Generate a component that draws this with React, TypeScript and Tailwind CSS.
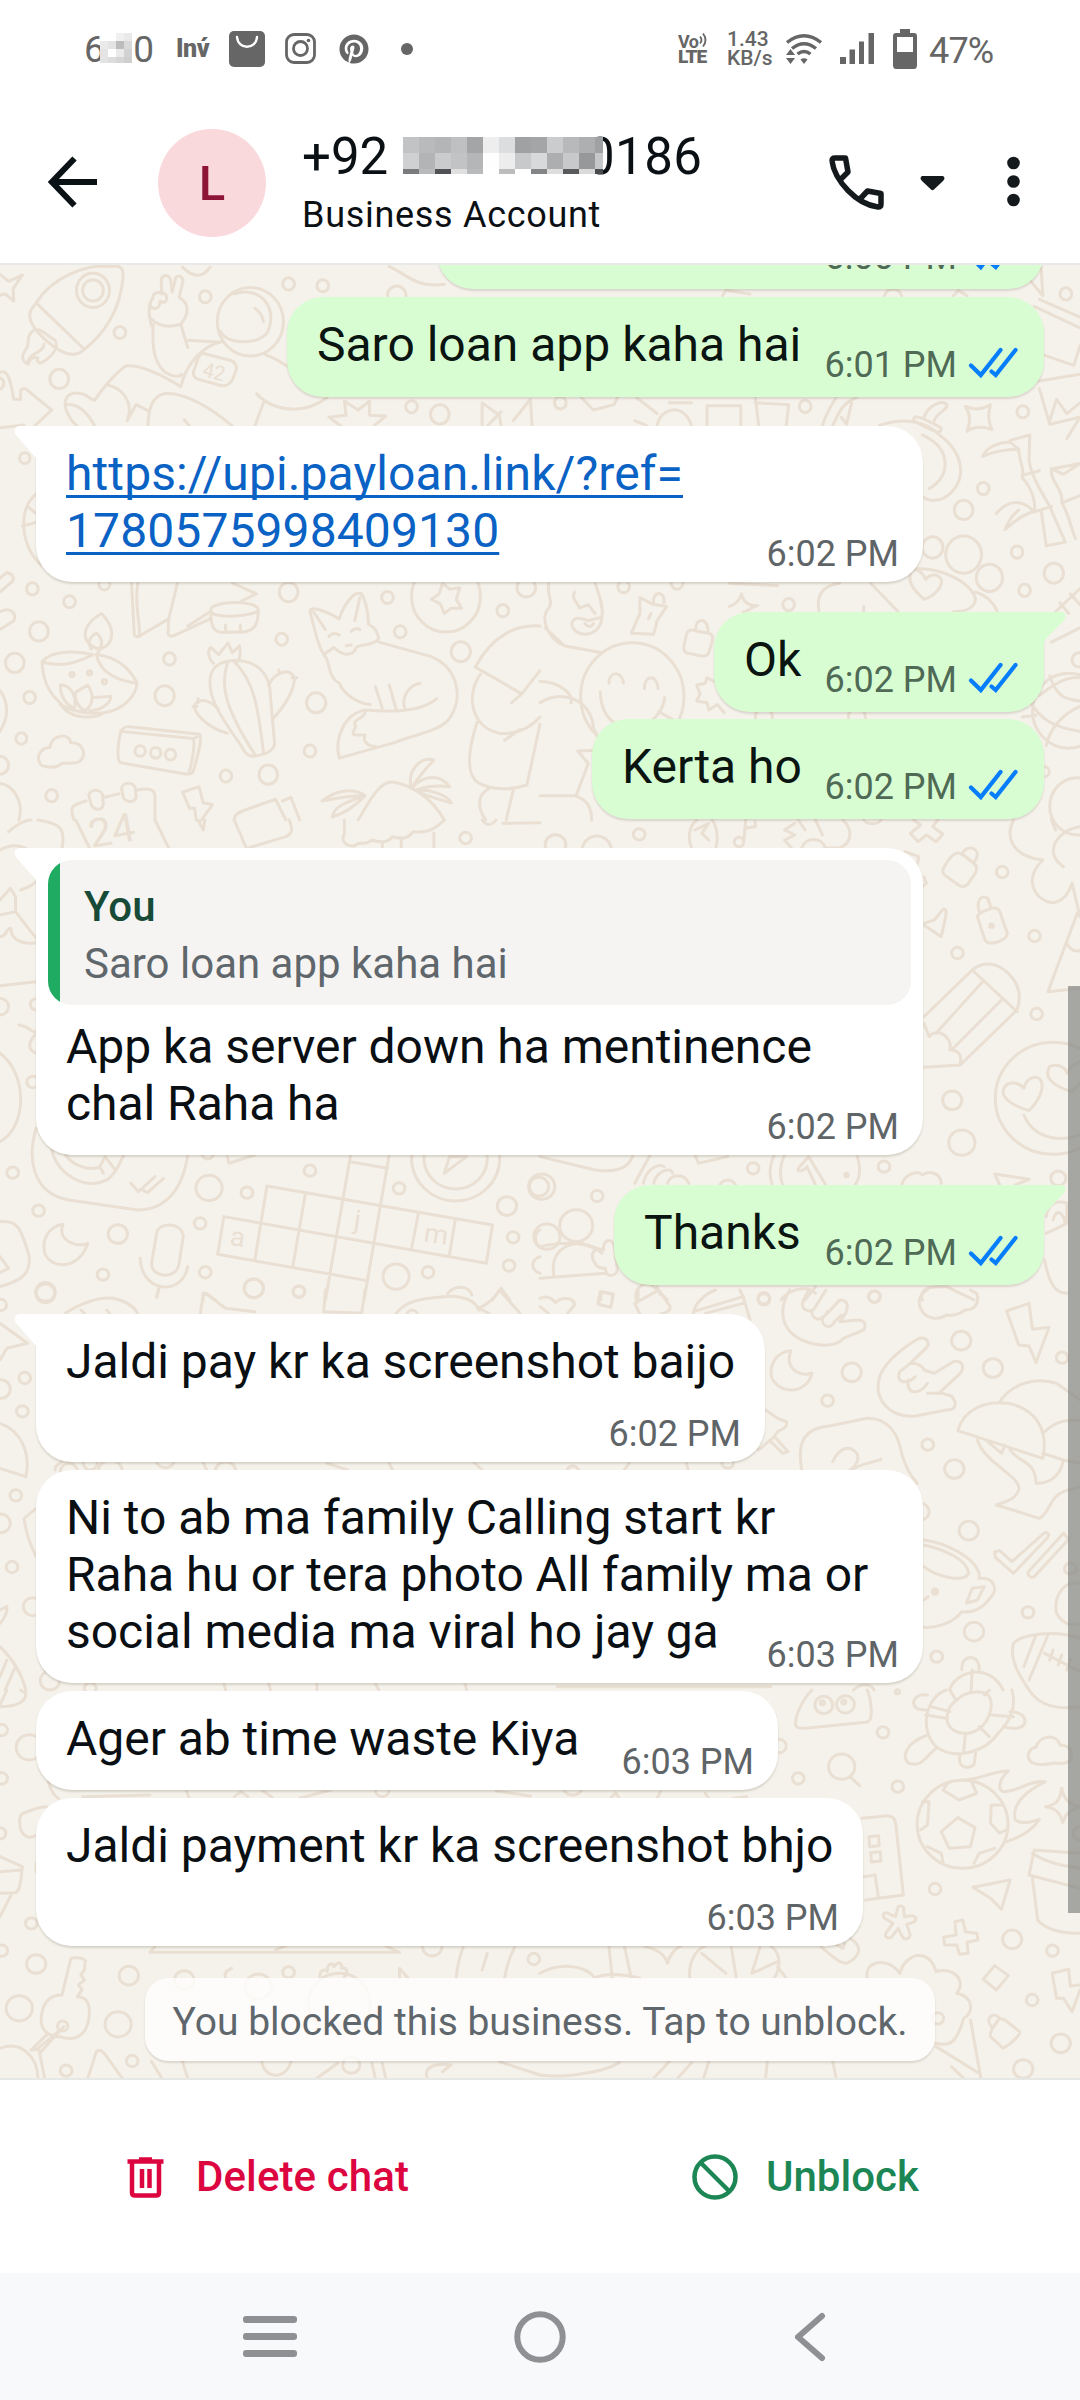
import type { ReactNode } from 'react'
import { FaPinterest } from 'react-icons/fa'

interface DoodleTile {
  transform: string
  paths: string[]
  // x, y, radius
  dots: [number, number, number][]
  letters?: [number, number, number, number, string][]
}

const TILES: DoodleTile[] = [
  {
    transform: 'translate(0 260) scale(.3444 .3571)',
    paths: [
      // rocket
      'M105 120C150 50 250 10 320 18C350 15 360 20 357 50C350 140 300 210 245 250C220 275 190 265 160 245C110 210 75 170 90 140ZM105 120L245 250',
      'M100 195C70 215 90 235 75 250C60 270 65 285 82 292C85 275 100 270 110 275C105 285 115 292 125 285C160 265 170 240 160 225M100 195C120 190 140 215 160 225M80 290C80 260 130 260 128 235',
      'M0 40L25 60L65 42L38 80L40 115L15 95L0 98',
      // astronaut
      'M440 185C430 150 432 120 445 105C440 95 460 85 470 95L468 55C472 40 490 40 495 55L500 90L510 50C520 38 535 50 530 65L520 105C550 120 550 150 525 180C490 190 460 185 440 165',
      'M435 125C445 145 465 135 465 115C480 125 490 110 480 95L470 92',
      'M445 180C440 250 450 290 480 315C500 325 520 330 528 320M525 180L545 245M548 225L640 230',
      'M680 95C760 70 810 140 775 205C740 240 660 235 640 200M740 135C755 145 762 155 765 172',
      'M590 262L665 280C685 285 690 300 685 310L675 335C665 352 650 355 635 350L580 335C560 330 558 315 565 305L575 275C580 265 585 262 590 262Z',
      'M525 355C540 290 590 240 640 230M525 355C470 320 400 290 365 297C330 320 290 370 275 393C260 390 250 370 215 373C190 375 185 400 192 420C200 440 215 460 225 465M190 405C230 400 255 430 275 465',
      'M310 350C350 355 380 390 375 430L370 450M375 440L395 405L430 422M430 465C430 420 440 380 480 374C540 370 620 420 675 465M535 447L550 465M745 375C800 430 890 430 950 385M765 400L740 465M770 265C800 275 825 290 850 310',
      'M0 315C20 305 30 330 40 390L60 390L60 365C65 358 75 358 80 365L150 420L100 465M0 470L70 462M0 330C15 335 15 355 0 362',
      'M955 440L1005 435L1000 395L1040 420L1073 395L1073 435L1120 437L1085 465M955 440L990 465',
      'M1400 465L1400 400L1450 435L1455 465M1415 465L1455 425M1490 450L1540 390L1545 465',
      'M530 20C560 50 590 50 610 20M1130 18C1180 40 1210 80 1290 68',
      'M105 655C50 700 60 800 120 855M65 745L105 735M80 690L105 710',
      // map and drum
      'M382 905L390 1050C395 1058 402 1056 410 1050L490 1005L515 905M400 905C390 960 405 1000 405 1050M490 1005L488 1045C490 1055 500 1055 510 1050L610 1005M545 1025L610 985',
      'M612 980C610 955 750 950 750 980C750 995 612 1010 612 980ZM612 980C610 1060 640 1040 690 1042C740 1045 750 1020 750 980M675 905L745 935L700 955M655 1022V1035M698 1022V1035',
      // oil lamp
      'M295 990C335 1030 335 1075 290 1090C240 1080 225 1030 295 990ZM265 1090C250 1060 270 1050 280 1045C300 1060 300 1080 280 1105',
      'M122 1125C150 1090 230 1095 270 1105C200 1140 150 1135 122 1125ZM122 1125C125 1190 150 1220 175 1240C200 1290 280 1285 300 1268C360 1260 395 1220 398 1185C370 1130 320 1110 280 1105C290 1160 350 1180 398 1185M175 1245C220 1270 270 1270 300 1268',
      'M175 1190C210 1190 225 1230 215 1255C190 1245 175 1220 175 1190M220 1210L255 1190C275 1220 270 1250 245 1262C225 1250 215 1230 220 1210M270 1225L322 1222C320 1245 290 1262 260 1262',
      // cactus
      'M610 1190C605 1130 650 1120 700 1122C760 1130 785 1170 785 1220L797 1350C800 1375 770 1385 735 1390C715 1390 710 1375 700 1360C650 1290 612 1240 610 1190ZM660 1130C640 1190 650 1250 740 1385M680 1125C740 1180 750 1260 765 1378',
      'M620 1130C600 1110 605 1090 612 1085L635 1105L662 1072L675 1100L695 1080C700 1100 695 1120 690 1125M780 1190C800 1150 850 1140 855 1175C850 1220 815 1260 793 1285M660 1325C600 1310 550 1260 570 1240C590 1225 620 1240 635 1260M810 1148V1160M848 1170H862M575 1228V1240M560 1250H572',
      // fox
      'M940 1105C925 1080 920 1060 900 985C900 970 930 975 985 1005C1000 960 1030 925 1050 935C1065 960 1070 1000 1070 1020C1090 1030 1095 1040 1100 1060C1085 1085 1030 1070 1030 1095C1015 1110 990 1105 970 1085C955 1095 945 1100 940 1105Z',
      'M910 985L945 1035M1030 1010L1045 945M955 1055C960 1045 975 1045 985 1050M1020 1040C1030 1030 1040 1030 1045 1035M1005 1080L1020 1078',
      'M1100 1070L1250 1110C1330 1140 1350 1230 1300 1290C1270 1320 1200 1330 1150 1350L985 1395C970 1340 1000 1270 1060 1260C1120 1265 1220 1270 1268 1228M940 1105C960 1120 950 1170 985 1185C1000 1220 1040 1240 1075 1245M1090 1195L1110 1255M1130 1190L1150 1258M1175 1255C1165 1220 1190 1190 1220 1185M1060 1265C1060 1285 1025 1285 1030 1300C1040 1310 1015 1325 1030 1330L1060 1330C1050 1350 1075 1365 1090 1362',
      'M1380 1140C1430 1050 1500 1020 1568 1025M1380 1140L1515 1215L1568 1150M1395 1160C1350 1220 1370 1310 1450 1325C1500 1330 1540 1310 1568 1280M1385 1295C1360 1370 1350 1440 1390 1465C1440 1490 1500 1480 1530 1470L1568 1300M1515 1215L1485 1240M1465 1345L1510 1315M1420 1480C1380 1500 1390 1540 1410 1568M1490 1485L1470 1568',
      'M120 1415C100 1390 120 1365 145 1365C150 1325 205 1325 205 1352C240 1350 255 1385 230 1405C210 1415 190 1405 180 1410C160 1425 135 1420 120 1415Z',
      'M350 1325C355 1305 370 1305 385 1308L580 1328C590 1340 570 1400 560 1435C550 1442 540 1440 530 1438L350 1408C338 1400 342 1350 350 1325ZM350 1320L560 1340C568 1345 560 1400 548 1438M560 1342L580 1330',
      'M215 1568C200 1530 210 1525 250 1515M300 1505L345 1495M395 1485C430 1478 448 1480 450 1500L450 1568M258 1500C260 1480 295 1480 298 1500L300 1525C295 1545 270 1540 265 1525ZM353 1480C355 1460 390 1460 393 1480L395 1505C390 1520 365 1520 358 1505Z',
      'M530 1490L578 1475L590 1520L617 1525L585 1568M530 1490L550 1535L565 1535L570 1568M680 1568C680 1545 700 1545 800 1510L830 1568M820 1515L845 1505L870 1568',
      'M1040 1568C1070 1520 1100 1460 1140 1462C1190 1470 1250 1500 1290 1568M1195 1480C1180 1430 1220 1390 1260 1400C1240 1420 1220 1440 1195 1480C1230 1440 1280 1440 1305 1475C1270 1470 1230 1475 1205 1485C1250 1480 1300 1500 1310 1520C1270 1510 1230 1500 1195 1480M935 1515C980 1480 1030 1480 1060 1500C1010 1500 960 1510 935 1515M1060 1500C1000 1520 970 1530 965 1560C1000 1550 1030 1530 1060 1500',
      'M1285 905L1305 922L1335 918L1325 950L1340 975L1310 975L1290 990L1278 962L1252 950L1275 935Z',
      'M0 890L20 875C40 880 45 895 30 905L0 930M0 985C30 970 50 990 40 1010L0 1035M0 1205C25 1240 25 1280 0 1320M0 1465C40 1470 70 1520 55 1568',
    ],
    dots: [
      [270, 85, 48], [270, 85, 30], [727, 173, 96], [838, 67, 17], [937, 72, 17], [596, 103, 17], [348, 203, 17], [172, 333, 27], [72, 555, 15], [1195, 411, 17],
      [1277, 432, 27], [1152, 100, 27], [94, 921, 17], [202, 957, 17], [838, 930, 27], [1125, 945, 17], [818, 1062, 17], [1162, 1041, 17], [113, 1040, 27],
      [43, 1128, 27], [492, 1117, 17], [478, 1220, 28], [86, 1225, 17], [62, 1340, 16], [918, 1240, 28], [900, 1375, 17], [656, 1445, 17], [779, 1441, 27],
      [150, 1500, 17], [1338, 1097, 28], [1460, 982, 17], [1528, 917, 27], [1295, 942, 100], [407, 1375, 15], [452, 1380, 15], [495, 1385, 15], [0, 1415, 25],
      [209, 1161, 6], [260, 1156, 6], [303, 1181, 6], [303, 908, 16],
    ],
    letters: [[585, 325, 14, 58, '42']],
  },
  {
    transform: 'translate(540 260) scale(.3444 .3571)',
    paths: [
      'M985 464C1050 440 1120 450 1160 490C1230 540 1240 610 1190 655C1160 680 1130 675 1115 665M1085 445C1085 435 1100 435 1165 470C1165 490 1150 485 1085 450M1115 440C1130 400 1180 390 1182 408C1180 420 1150 430 1145 450M1110 490C1200 530 1190 610 1130 640',
      'M485 464V408H583V464M625 400L722 405L715 464M625 380L635 464M340 464C350 410 420 400 440 464M820 464C830 430 850 400 860 385M850 464C870 420 880 400 920 385M875 440L890 460L905 400M120 385L155 420L215 405L225 385M280 385L340 430M375 400H440M275 450L310 464',
      'M1235 410C1260 420 1280 420 1308 405C1300 430 1300 450 1312 475C1290 465 1260 465 1240 480C1250 455 1250 430 1235 410Z',
      // bamboo
      'M1365 505L1422 490L1420 560C1425 600 1450 640 1480 690L1525 790L1470 800L1455 700M1390 530C1390 560 1410 590 1400 610C1430 640 1440 680 1435 705M1400 603L1450 590M1438 705L1485 690M1285 550C1300 520 1340 510 1365 510L1390 530C1350 530 1310 540 1285 550ZM1325 710C1360 670 1400 670 1435 705C1400 710 1370 740 1350 755C1360 730 1370 715 1390 700',
      'M1568 570L1485 585C1480 620 1520 640 1515 680C1540 720 1540 750 1555 780M1515 680L1568 660M1485 585L1520 600L1568 570',
      'M1435 130L1568 190M1450 110L1568 160M1445 260L1550 295L1568 240M1440 340L1568 320M1450 360L1480 460L1568 440M1480 450L1500 390L1530 430L1568 400M1530 500L1568 440M1400 30L1460 100L1455 20M530 100L540 85L610 95M1000 100C1010 75 1040 75 1050 100M1200 100L1215 85L1240 100',
      'M1080 870C1060 900 1090 930 1115 950C1150 940 1170 910 1165 895C1155 875 1130 880 1120 895C1110 870 1090 865 1080 870ZM1090 865C1160 860 1250 900 1265 950C1260 975 1240 985 1200 985M810 985C800 930 830 910 870 905M960 905L1040 985M1265 930C1300 940 1320 965 1328 985M550 905L690 912M940 985V970',
      // gnome and smiley
      'M25 905C20 940 40 960 25 975C0 1000 20 1060 70 1080L180 1100M160 905C170 935 185 970 180 1000C175 1060 100 1060 92 1020C95 1000 110 1000 140 1010L180 1000M100 930C90 950 110 960 115 975L140 965L160 990M130 1018C140 1030 150 1028 155 1018M70 1080L15 1030',
      'M200 1185C200 1150 240 1150 242 1185M303 1200C303 1160 340 1160 343 1200M175 1210C180 1300 240 1320 300 1300C340 1290 360 1250 362 1225M345 1265L410 1300',
      'M265 1045L290 990L290 945L330 965L368 970L340 1010L330 1048ZM330 960C325 925 365 925 360 960M315 1005L322 990',
      'M425 1050C428 1035 440 1035 450 1038L490 1045C505 1050 502 1060 498 1075L490 1100C485 1110 475 1110 465 1108L425 1100C413 1095 418 1080 425 1050ZM452 1035C450 1000 490 1000 488 1042',
      'M550 970C570 965 580 950 585 935C590 960 610 970 632 968C605 975 595 990 590 985M505 1180L485 1170L480 1185L455 1190L465 1215L455 1235L485 1240L490 1260L515 1245L535 1268',
      'M1420 1230C1450 1290 1500 1310 1568 1320M1480 1165C1500 1220 1520 1230 1568 1235M1450 1220C1500 1180 1540 1165 1568 1170M1470 1360C1480 1310 1520 1270 1568 1250M1400 1280L1440 1275',
      'M0 1180C60 1180 100 1220 90 1240M0 1240C60 1200 150 1230 155 1310L170 1340M110 1375L170 1372M110 1375L140 1410L105 1500M0 1500L100 1500C140 1510 150 1540 150 1568',
      'M1470 1010L1568 920M1485 1070L1568 1030M1510 960L1535 990M1540 935L1568 965',
    ],
    dots: [
      [268, 1222, 150], [1230, 825, 52], [1305, 890, 38], [1230, 700, 27], [1140, 805, 30], [59, 400, 17], [770, 410, 17], [1402, 425, 17], [1287, 640, 17],
      [1385, 818, 17], [1407, 925, 17], [1492, 877, 28], [722, 965, 17], [243, 915, 17], [398, 905, 17], [1527, 95, 17], [1565, 1120, 20], [1535, 1262, 105],
      [1560, 1530, 80], [650, 1280, 25], [920, 1280, 25], [1465, 1433, 14],
    ],
  },
  {
    transform: 'translate(0 820) scale(.3444 .3333)',
    paths: [
      'M110 0C180 10 190 30 180 84M220 0L260 84M450 0L490 84M575 0L590 30L595 0M680 0L715 84M840 0C850 30 850 40 830 50L720 84M1000 0L1000 40C990 60 1000 80 1030 78C1040 60 1060 80 1080 60C1110 70 1130 65 1140 50C1170 60 1190 50 1200 35C1240 40 1260 30 1290 0M1110 70V84M1165 60V84M1260 40V84M1400 0C1420 30 1440 0 1440 0M1460 10L1568 8',
      'M25 35C40 20 70 0 90 0M0 90C50 60 100 90 103 120M0 240L30 205L45 230L45 275L105 355M0 350C20 350 20 320 32 325C30 355 60 375 105 368M0 285L45 275M60 210C90 200 100 190 105 185M0 497L105 485M55 615C90 620 90 640 105 635M105 640C80 670 80 690 105 700M0 700C80 760 80 920 0 965',
      // watch
      'M105 925C80 1010 90 1120 200 1140L400 1170C480 1170 530 1110 545 1005M150 990C170 1070 250 1110 310 1080C340 1060 350 1020 360 1005M190 1005C220 1050 280 1050 290 1040L300 1060M380 1090L402 1115L450 1070M415 1110L428 1118L475 1075M290 1040L305 1010L335 1050M660 1010L665 1030L740 1005',
      // crossword
      'M775 1098L1430 1215M650 1190L1412 1330M632 1303L1065 1382M775 1098L740 1320M887 1120L850 1340M1018 1005L945 1440M1130 1005L1057 1440M1215 1180L1195 1285M1322 1198L1305 1305M1430 1215L1412 1330M650 1190L632 1303M1015 1025L1125 1045',
      'M1290 1060L1305 1010L1355 1010ZM183 1213C140 1220 120 1260 130 1300C150 1350 230 1350 255 1270C220 1285 165 1260 183 1213Z',
      'M455 1240C460 1205 530 1205 532 1250L520 1330C515 1380 440 1375 440 1330ZM407 1315C410 1420 530 1430 545 1340M462 1400L455 1432',
      'M0 1205C50 1200 60 1220 85 1310C90 1370 50 1385 0 1400M0 1310L25 1345L0 1358M590 1440V1420C600 1415 610 1430 625 1440M1300 1420C1320 1395 1360 1395 1370 1425M1430 1440L1455 1405L1480 1440M1568 1230C1550 1240 1550 1270 1568 1280M1568 1310C1540 1320 1540 1350 1568 1360',
    ],
    dots: [
      [1323, 1015, 128], [1323, 1015, 92], [0, 560, 25], [105, 553, 17], [95, 786, 17], [37, 1058, 17], [607, 1104, 38], [717, 1118, 17], [900, 1052, 17],
      [1159, 1105, 17], [1472, 1158, 28], [1565, 1100, 28], [112, 1172, 17], [342, 1242, 28], [581, 1210, 17], [1490, 1252, 17], [1478, 1337, 17],
      [299, 1364, 17], [132, 1416, 28], [596, 1357, 17], [737, 1405, 28], [868, 1415, 17], [1150, 1370, 38], [1243, 1357, 17], [1352, 54, 17], [603, 1000, 17],
    ],
    letters: [[265, 84, -10, 120, '24'], [665, 1275, 8, 80, 'a'], [1025, 1225, 8, 80, 'j'], [1228, 1265, 8, 80, 'm']],
  },
  {
    transform: 'translate(540 820) scale(.3444 .3333)',
    paths: [
      'M440 84C430 60 430 20 455 0M500 0C520 30 515 70 510 84M450 30L490 10L470 40L490 60M592 60L597 0M597 25L625 20V5M710 30L740 10M710 30L740 45L710 60L730 84M750 0L770 30M800 0L820 45M760 84C770 50 820 50 828 84M880 0C910 30 905 70 870 84H830M940 0C950 15 980 15 990 0',
      'M1085 0L1105 15L1075 40L1098 65L1122 45L1150 65L1170 42L1140 20L1155 0',
      'M1375 0C1350 50 1370 110 1460 120C1400 180 1440 245 1490 248C1520 245 1535 220 1545 190M1568 20C1500 30 1460 100 1520 140M1485 0L1497 30M1545 190L1568 290M1475 515L1560 280M1475 515L1568 505M1530 370C1540 390 1550 395 1568 392',
      // padlocks
      'M1180 130C1200 95 1215 95 1230 105L1265 135C1272 150 1265 160 1250 180C1240 200 1230 205 1215 195L1175 165C1165 155 1170 145 1180 130ZM1225 105C1235 75 1270 80 1270 105C1268 120 1260 125 1258 130',
      'M1270 290C1275 275 1290 275 1310 265C1330 260 1335 270 1340 290L1357 340C1355 355 1345 360 1325 367C1305 372 1295 370 1290 355ZM1275 275C1265 235 1285 225 1300 235L1310 265',
      'M1060 95L1100 110L1095 135M1115 170L1122 190L1110 200M1115 310L1145 300L1170 268C1180 265 1180 275 1178 290L1165 350L1115 315',
      // pencil
      'M1115 590L1255 450C1290 420 1330 430 1360 460C1400 500 1395 540 1385 570L1220 735L1115 742M1255 450L1385 575M1285 485L1150 640M1340 540L1195 690M1115 610L1130 650C1150 620 1200 650 1190 690C1220 690 1225 710 1220 735',
      // heart eyes
      'M1350 800C1335 820 1350 850 1420 872C1460 830 1465 790 1450 775C1430 765 1410 780 1405 805C1390 785 1360 785 1350 800ZM1480 740C1460 770 1490 800 1545 815L1568 790M1480 740C1500 730 1525 740 1530 760C1540 740 1550 730 1568 725M1405 885C1430 950 1500 970 1568 945',
      'M0 1010L160 1050C230 1060 260 1040 270 1005M275 1090L320 1005M300 1090C310 1040 350 1030 360 1040M330 1090C340 1050 380 1040 385 1060M370 1090C380 1060 420 1060 432 1090M450 1005L460 1030L545 1010M680 1005C665 1040 665 1070 675 1095M710 1005C695 1040 695 1070 705 1095M920 1005C935 1050 925 1080 915 1095M750 1045L780 1010L830 1095M750 1045C745 1060 770 1050 775 1040L800 1095M1050 1095C1060 1060 1100 1050 1110 1065C1130 1050 1165 1060 1165 1090M1320 1062L1420 1078L1380 1095M1320 1062L1335 1095',
      'M40 1365C30 1300 70 1270 120 1270L180 1290M0 1280C80 1260 150 1270 180 1300M0 1375L190 1360M160 1330C140 1300 160 1280 185 1290C180 1260 210 1250 215 1280L225 1350C220 1370 190 1375 190 1345C180 1345 165 1345 160 1330',
      'M1470 1190C1475 1150 1500 1140 1530 1150L1530 1210M1490 1200C1500 1160 1520 1180 1525 1210M1470 1240L1530 1210M1465 1320C1480 1400 1500 1420 1530 1420M175 1440L180 1415L210 1422V1440M280 1440C270 1400 310 1380 330 1400L370 1440M340 1400L350 1425M700 1440C730 1400 780 1400 800 1420M770 1440L800 1400M1110 1440C1100 1400 1140 1400 1180 1400L1260 1440',
    ],
    dots: [
      [1490, 835, 168], [578, 66, 14], [105, 1217, 48], [20, 1250, 38], [288, 43, 17], [45, 74, 30], [165, 90, 42], [1342, 156, 17], [1436, 348, 17], [1212, 399, 17],
      [1442, 582, 17], [1197, 841, 28], [1225, 968, 38], [619, 1045, 17], [999, 1040, 17], [166, 1128, 17], [5, 1100, 38], [890, 1065, 5], [1311, 317, 5],
      [1505, 1075, 22], [650, 1435, 17], [971, 1430, 17], [545, 1105, 25],
    ],
  },
  {
    transform: 'translate(0 1290) scale(.3444 .3333)',
    paths: [
      'M190 70C230 40 290 20 330 25C370 35 390 50 400 70M235 60L245 70M310 60L318 70M582 70L590 15C600 5 620 30 655 55L740 65M945 0L940 65L1050 70L1060 0M1150 70C1180 30 1230 25 1290 20C1340 15 1380 30 1390 60M1390 55C1420 40 1440 20 1450 0L1510 70M1390 55L1420 70M460 0L455 22',
      'M0 100L80 160L20 175L0 210M0 400C60 420 90 490 75 560L0 535M105 655L70 685C75 730 90 770 105 800M0 960L20 950C22 970 10 990 0 1000M0 1070C30 1100 60 1140 75 1200M15 1200L45 1130M0 1160L20 1110',
      'M160 540C160 525 170 520 180 516M590 518L600 540M950 520L1010 540M1130 520L1140 540M1375 516L1400 540M650 1180L655 1200M780 1180L785 1200M920 1200V1180M1090 1180L1100 1200M1350 1180L1355 1200',
    ],
    dots: [
      [132, 10, 28], [2, 45, 17], [737, -5, 28], [868, 5, 17], [1197, 75, 15], [72, 264, 17], [2, 297, 28], [65, 364, 17], [46, 616, 17], [2, 700, 28], [35, 831, 17],
      [95, 950, 27], [145, 1172, 28], [262, 1195, 17], [200, 545, 25], [262, 520, 20], [480, 505, 28], [320, 545, 35], [655, 545, 30],
    ],
  },
  {
    transform: 'translate(540 1290) scale(.3444 .3333)',
    paths: [
      'M0 25C20 15 35 25 45 38C60 20 100 20 100 45L80 70M0 50L25 70M175 5L213 13L205 52L168 42ZM275 40L345 0L378 50C380 65 360 70 350 72M275 40L290 72M285 30V0M445 70C450 40 480 10 510 0M445 65L590 20L610 90M580 0L590 20M480 70L590 40',
      // hands
      'M725 0C690 60 700 120 760 150C830 180 870 160 880 145L940 120C950 100 940 90 920 90L870 95M765 30C750 60 790 75 800 50M790 60C785 90 820 100 835 65M820 80C815 110 845 120 855 95L875 75M765 30L780 0M800 50L830 0M835 70L870 30C900 30 900 60 870 95',
      'M1105 55C1095 30 1105 10 1125 0M1105 55C1120 90 1160 90 1180 75C1200 80 1220 70 1235 60C1270 60 1275 30 1268 10L1250 0',
      'M1355 63L1420 40L1430 118L1478 112L1440 218L1420 168L1390 165ZM728 182C690 185 665 220 672 260C690 310 770 320 790 250C750 260 710 235 728 182Z',
      'M990 250C1010 210 1060 170 1100 145C1125 140 1135 160 1120 175L1075 220C1095 220 1110 225 1115 240L1145 250L1200 215C1225 210 1235 230 1220 250L1160 308L1195 318C1215 345 1205 360 1180 360L1090 378C1020 385 960 330 990 250ZM1045 245C1030 270 1060 290 1090 260M1070 270C1060 310 1100 320 1125 280M1075 220L1045 245M1125 310H1160',
      // umbrella
      'M1213 422C1230 360 1290 330 1360 340C1450 360 1475 430 1460 505ZM1335 335C1370 280 1440 260 1500 280L1568 330M1270 450C1290 520 1400 560 1390 600C1380 630 1350 635 1325 645L1450 685C1480 670 1480 620 1520 605L1568 590M1300 455L1340 490L1350 465M1365 480C1390 520 1440 510 1440 580C1480 580 1510 560 1520 510L1460 490M1460 430C1500 390 1530 390 1568 390M1520 510L1568 520',
      'M1320 785L1335 782L1370 815L1465 728C1475 725 1482 735 1472 745L1375 850L1322 802ZM1418 845L1520 730L1535 748L1435 860C1425 865 1415 858 1418 845Z',
      'M760 540C745 450 770 415 840 408L950 385C1010 385 1040 430 1050 490C1070 560 1090 570 1095 580M850 515C870 470 900 465 920 490C930 510 915 530 900 540M905 540C930 520 960 520 990 508M655 360L690 385L715 395C720 410 710 415 690 425L680 440L635 480M685 445L720 485L705 490L670 455',
      'M1115 750C1180 760 1260 800 1275 850C1275 860 1275 860 1275 865M1115 765C1180 780 1240 810 1245 850C1230 880 1150 860 1115 830M1275 865C1320 860 1330 900 1310 920C1290 950 1260 970 1225 965C1200 1000 1150 1015 1115 1012M1255 895L1290 890L1270 930L1238 940ZM1115 930L1127 920',
      'M1568 880C1520 870 1490 920 1500 970C1515 1000 1540 1010 1568 1000M1375 1060C1400 1030 1500 1020 1568 1045M1375 1060C1360 1110 1400 1170 1420 1200M1440 1035L1405 1130M1475 1035L1420 1170M1465 1090L1568 1145M1490 1080L1480 1110M1515 1095L1505 1125M1540 1108L1530 1140M1190 1200C1200 1150 1300 1110 1345 1200M1225 1140C1220 1090 1280 1090 1275 1140M1255 1140L1252 1200',
      'M50 1190H670M245 540L260 518M425 518L430 540M910 1200C930 1180 960 1180 970 1200',
    ],
    dots: [
      [650, 28, 17], [971, 20, 17], [1223, 152, 28], [1315, 234, 28], [1516, 203, 17], [905, 247, 28], [835, 332, 17], [1126, 464, 17], [1203, 537, 28],
      [1245, 722, 28], [1417, 967, 17], [1540, 836, 17], [1260, 1025, 28], [1152, 1100, 17], [1105, 665, 25], [545, 518, 17], [1147, 905, 8], [1147, 905, 4], [95, 545, 17],
    ],
  },
  {
    transform: 'translate(0 1690) scale(.3444 .3333)',
    paths: [
      'M0 50C40 50 75 40 75 10L60 0M0 45L20 0M135 350C100 350 90 365 65 370C50 385 60 400 58 410C65 440 85 450 105 435M0 500L65 530C60 570 60 600 45 608L0 610M0 545L60 540M35 610L0 680M105 520V545',
      // key
      'M205 808C210 800 240 803 248 812L245 840L235 855L245 870L228 885L238 900L225 920C260 920 265 960 255 1000C245 1040 210 1055 175 1040C140 1040 115 1020 120 980C125 930 150 915 180 915ZM175 1020L105 1080M140 1030L90 1080M185 1010L115 1090M0 1075C60 1050 110 1100 110 1165M115 1090L130 1165M95 1080L110 1075L118 1088',
      'M255 1165L280 1085C290 1075 300 1085 310 1100L355 1165M435 787H1160M435 787L450 770M800 780L830 768M1120 768L1160 787M655 865C650 850 660 840 672 835M930 865C925 840 945 835 950 845C950 820 965 815 970 830C980 815 995 815 992 835C1010 830 1010 850 1000 860M1160 865V835L1185 865M1325 865C1325 830 1335 800 1345 770M1400 840L1415 790M1465 865C1470 830 1480 800 1495 770',
      'M440 1115L470 1165M530 1115L545 1165M760 1115C770 1170 830 1170 845 1115M920 1165L980 1120M1080 1120L1090 1165M1110 1120L1120 1165M1240 1165C1230 1130 1260 1120 1310 1125L1285 1145M1450 1115L1568 1155M140 275C150 310 160 320 170 325M240 320L435 315M540 300L550 325M680 320L700 305L720 320M870 325L960 300M760 300L790 322M1440 303L1540 318',
    ],
    dots: [
      [182, 1008, 15], [5, 120, 17], [85, 172, 38], [5, 265, 17], [0, 430, 17], [91, 700, 17], [5, 782, 17], [105, 822, 28], [374, 857, 28], [56, 955, 38],
      [343, 1003, 38], [384, 1113, 17], [192, 1142, 17], [838, 847, 17], [1255, 770, 28], [1550, 807, 17], [535, 870, 28], [1020, 1125, 25], [750, 890, 38], [985, 940, 90], [1110, 300, 20],
    ],
  },
  {
    transform: 'translate(540 1690) scale(.3444 .3333)',
    paths: [
      'M790 0C760 30 740 80 742 105C745 115 755 115 770 115L945 97C960 95 962 85 962 60C960 30 955 10 950 0',
      // turtle
      'M1180 0C1120 20 1100 120 1150 170C1200 210 1290 190 1330 130C1380 80 1380 30 1370 0M1200 120C1170 100 1180 50 1210 30C1240 0 1290 0 1305 20C1320 50 1300 110 1260 125C1240 135 1215 130 1200 120ZM1120 75L1180 85M1235 130L1230 190M1275 110L1305 140M1310 75L1375 80M1190 0L1208 30M1290 15L1305 0M1135 50L1190 65',
      'M1125 15C1080 10 1075 50 1100 58L1120 60M1125 135C1060 160 1050 200 1070 220C1110 230 1110 210 1150 175M1220 195C1210 230 1240 240 1260 225L1265 190M1365 65C1400 65 1415 85 1405 105C1390 120 1360 115 1345 110',
      'M1425 215C1410 200 1420 175 1440 172C1450 135 1500 130 1510 165C1540 165 1550 190 1540 210C1520 230 1500 215 1490 220C1465 225 1440 225 1425 215ZM1420 0C1450 50 1510 60 1568 50M900 260L928 287',
      'M935 385L1010 377C1030 380 1032 390 1035 420L1055 615L945 630M955 440L983 437L985 467L957 470ZM960 488L988 485L990 513L962 516ZM940 560L973 555L983 625',
      // football on fire
      'M1213 383L1263 413L1250 470L1188 475L1165 425ZM1183 280L1170 300L1217 330L1268 310L1255 280M1110 335H1130L1125 405L1105 420M1340 345H1310L1308 400L1335 430L1352 420M1125 470L1165 490L1170 515M1320 475L1275 490L1260 520',
      'M1225 270C1280 270 1320 240 1360 243C1330 270 1330 300 1345 305C1390 305 1420 270 1467 275C1400 310 1370 350 1380 390C1400 405 1430 395 1450 388C1430 420 1400 440 1355 455M1515 295C1520 330 1540 345 1568 352C1540 360 1525 370 1518 398C1510 370 1500 355 1468 350C1500 345 1510 330 1515 295Z',
      'M1435 480L1568 490M1435 480L1420 555L1568 595M1430 565L1445 690C1470 720 1520 730 1568 730M1430 490C1470 520 1530 530 1568 535M1257 592L1365 570L1340 658L1308 625Z',
      'M1040 650C1050 645 1058 650 1056 660L1058 680L1080 677C1095 680 1095 692 1082 697L1065 703L1075 735C1070 750 1058 750 1052 740L1040 715L1020 742C1005 748 1000 738 1005 728L1025 700L1000 685C993 675 1000 665 1010 670L1032 680Z',
      'M1205 695L1228 690L1235 725L1268 730L1272 750L1240 757L1243 790L1218 793L1210 765L1175 765L1172 742L1208 735ZM1320 827L1360 857L1325 900L1287 868ZM1487 850L1535 838L1540 888L1568 885M1487 850L1500 925H1520L1545 965L1568 900',
      'M1310 1010C1290 980 1320 965 1335 985L1350 990L1393 1025C1395 1035 1370 1060 1345 1075L1308 1040C1305 1030 1315 1010 1335 985',
      'M950 865C940 810 1010 800 1045 850C1060 790 1130 770 1150 845C1200 830 1240 870 1210 910C1260 920 1260 970 1230 985C1210 1060 1190 1070 1150 1060M1150 1070L1275 1150M1250 990L1280 1165M1195 1130L1230 1165',
      'M815 770C850 800 870 820 890 820C930 800 940 770 900 745M860 765L880 775L885 760M435 865C430 820 450 780 480 768M470 790L540 850M555 768L570 865M640 768L615 850L690 815M670 768C700 790 700 830 680 865M690 830L715 865M305 770C350 780 365 800 370 820C375 800 390 775 410 768M200 768L210 865M245 768L265 865M0 850C50 820 130 820 160 865C180 850 240 850 290 865',
      'M0 1155C60 1165 180 1150 230 1118M330 1165L375 1115M490 1115L475 1165M440 1118L400 1165M660 1115L655 1165M850 1115L860 1165M205 325L220 308L230 325M340 325L350 305M480 310L490 325M560 325L600 320',
    ],
    dots: [
      [824, 45, 26], [887, 43, 26], [820, 38, 6], [882, 36, 6], [876, 230, 38], [1227, 403, 132], [750, 265, 17], [996, 127, 17], [1039, 290, 17],
      [1147, 597, 17], [1371, 748, 28], [1488, 782, 17], [1429, 930, 17], [1512, 1060, 28], [1403, 1137, 28], [695, 168, 20], [1038, 5, 6], [1155, 985, 17], [95, 285, 30], [1568, 430, 20],
    ],
  },
]

function Wallpaper() {
  return (
    <svg className="absolute inset-0" width="1080" height="1813" viewBox="0 265 1080 1813" fill="none" stroke="#eadfd3" strokeWidth="3" strokeLinecap="round" strokeLinejoin="round">
      {TILES.map((tile) => (
        <g key={tile.transform} transform={tile.transform}>
          {tile.paths.map((d) => (
            <path key={d} d={d} vectorEffect="non-scaling-stroke" />
          ))}
          {tile.dots.map(([x, y, r]) => (
            <circle key={`${x}-${y}-${r}`} cx={x} cy={y} r={r} vectorEffect="non-scaling-stroke" />
          ))}
          {tile.letters?.map(([x, y, angle, size, label]) => (
            <text key={label} x={x} y={y} fontSize={size} transform={`rotate(${angle} ${x} ${y})`} fill="#eadfd3" stroke="none" fontFamily="Roboto, sans-serif">
              {label}
            </text>
          ))}
        </g>
      ))}
    </svg>
  )
}

function StatusBar() {
  return (
    <div className="flex h-[97px] items-center pl-[84px] pr-[84px] text-[#666666]">
      <div className="flex h-[36px] w-[70px] items-center justify-between pt-[3px] text-[37px] leading-[36px]">
        <span>6</span>
        <Mosaic rows={STATUS_MOSAIC} className="relative z-10 -ml-[6px] -mt-[4px] w-[32px]" cell="h-[8px] w-[8px]" last="h-[6px] w-[8px]" />
        <span>0</span>
      </div>
      <span className="ml-[22px] w-[34px] text-[25px] font-black leading-none tracking-[-0.5px]">Inv́</span>
      <svg className="ml-[19px]" width="36" height="36" viewBox="0 0 36 36">
        <rect width="36" height="36" rx="5" fill="#666" />
        <path d="M8 6c1 13 19 13 20 0" fill="none" stroke="#fff" strokeWidth="2.4" strokeLinecap="round" />
      </svg>
      <svg className="ml-[20px]" width="31" height="31" viewBox="0 0 31 31" fill="none" stroke="#666" strokeWidth="2.8">
        <rect x="1.5" y="1.5" width="28" height="28" rx="7.5" />
        <circle cx="15.5" cy="15.5" r="7" />
        <circle cx="23.5" cy="7.5" r="1.8" fill="#666" stroke="none" />
      </svg>
      <FaPinterest className="ml-[23px]" size={30} />
      <span className="ml-[32px] h-[12px] w-[12px] rounded-full bg-[#666666]" />

      <div className="ml-auto flex items-center">
        <div className="mt-[1px] flex w-[31px] flex-col font-bold leading-none">
          <div className="flex h-[15px] items-center">
            <span className="text-[18px] leading-[15px] tracking-[-0.5px]">Vo</span>
            <svg className="-mt-[2px]" width="9" height="16" viewBox="0 0 9 16" fill="none" stroke="#666" strokeWidth="1.8">
              <path d="M1 4.500q3 3.500 0 7M4 1.500q5 6.500 0 13" />
            </svg>
          </div>
          <span className="text-[19px] font-black leading-[16px] tracking-[-1px]">LTE</span>
        </div>
        <div className="ml-[18px] flex w-[46px] flex-col text-[21px] font-medium leading-[20px]">
          <span>1.43</span>
          <span className="-mt-[1px]">KB/s</span>
        </div>
        <svg className="ml-[12px]" width="38" height="32" viewBox="0 0 38 32" fill="none" stroke="#666" strokeWidth="3.4">
          <path d="M2 9.500Q19 -4 36 9.500M7 15.500Q19 6 31 15.500M12.500 21Q19 16 25.500 21" />
          <path d="M19 31l-3.500-4.500q3.500-2.500 7 0zM5.500 16l4.500 6H1zM5.500 31l4.500-6H1z" fill="#666" stroke="none" />
        </svg>
        <svg className="ml-[17px]" width="35" height="31" viewBox="0 0 35 31" fill="#666">
          <path d="M0 24h6v7H0zM9.500 16.500h5.500V31H9.500zM19 8.500h5V31h-5zM28.500 0h5.500v31h-5.500z" />
        </svg>
        <svg className="ml-[18px]" width="24" height="40" viewBox="0 0 24 40">
          <path d="M7 0h10v4h4q3 0 3 3v29q0 4-3 4H3q-3 0-3-4V7q0-3 3-3h4zM4 8v15h16V8z" fill="#666" fillRule="evenodd" />
        </svg>
        <span className="ml-[12px] mt-[4px] w-[67px] text-[36px] leading-[36px] tracking-[-0.8px]">47%</span>
      </div>
    </div>
  )
}

const STATUS_MOSAIC = [
  ['#ffffff', '#ffffff', '#f0f0f0', '#e9e9e9'],
  ['#eaeaea', '#e3e3e3', '#bcbcbc', '#d9d9d9'],
  ['#e4e4e4', '#ffffff', '#eaeaea', '#d2d2d2'],
  ['#e3e3e3', '#dddddd', '#d6d6d6', '#cfcfcf'],
]

const NUMBER_MOSAIC = [
  ['#c2c3c5', '#b9babc', '#b4b5b7', '#bfc0c2', '#a4a5a7', '#eeeeef', '#dcddde', '#9fa1a3', '#a3a5a7', '#cbccce', '#b8b9bb', '#adafb1', '#9fa1a3'],
  ['#cfd0d1', '#b3b4b6', '#cacbcd', '#c2c3c5', '#b5b6b8', '#fefefe', '#ededee', '#c8c9cb', '#d8d9da', '#adaeb0', '#c8c9cb', '#97989a', '#c6c7c8'],
  ['#7a7b7d', '#b9babb', '#505255', '#e0e0e0', '#b9babb', '#ffffff', '#bcbcbd', '#ffffff', '#848587', '#dededf', '#585a5c', '#dadada', '#4a4c4e'],
]

interface MosaicProps {
  rows: string[][]
  className: string
  cell: string
  last: string
}

function Mosaic({ rows, className, cell, last }: MosaicProps) {
  return (
    <div className={`flex shrink-0 flex-col overflow-hidden ${className}`}>
      {rows.map((row, y) => (
        <div key={y} className="flex">
          {row.map((color, x) => (
            <span key={x} className={`shrink-0 ${y === rows.length - 1 ? last : cell}`} style={{ background: color }} />
          ))}
        </div>
      ))}
    </div>
  )
}

function Header() {
  return (
    <header className="flex h-[168px] items-start border-b-2 border-[#e9e9e7] pl-[48px]">
      <svg className="mt-[59px]" width="50" height="52" viewBox="0 0 50 52" fill="none" stroke="#0b1216" strokeWidth="6">
        <path d="M49 26H5M26.500 2.500L4 26l22.500 23.500" />
      </svg>
      <div className="ml-[60px] mt-[32px] flex h-[108px] w-[108px] items-center justify-center rounded-full bg-[#fad9dd] pt-[2px] text-[49px] font-medium text-[#8d1436]">
        L
      </div>
      <div className="ml-[36px] mt-[30px] w-[420px] text-[#0b1014]">
        <div className="flex h-[60px] items-center whitespace-pre text-[51px] leading-[60px]">
          <span className="w-[101px]">+92</span>
          <Mosaic rows={NUMBER_MOSAIC} className="relative z-10 mb-[3px] w-[200px]" cell="h-[16px] w-[16px]" last="h-[5px] w-[16px]" />
          <span className="-ml-[17px] tracking-[0.4px]">0186</span>
        </div>
        <div className="mt-[6px] text-[36px] leading-[44px] tracking-[0.7px]">Business Account</div>
      </div>
      <svg className="ml-[107px] mt-[58px]" width="55" height="55" viewBox="0 0 55 55" fill="none" stroke="#14191c" strokeWidth="5.500" strokeLinejoin="round">
        <path d="M3 6q0-3 3-3h10.500l2.500 14-8.500 8.500M3 6Q5 21 19 35.500T49 52q3 0 3-3V38.500L38.500 36l-8 8.500" />
      </svg>
      <svg className="ml-[36px] mt-[78px]" width="25" height="18" viewBox="0 0 25 18" fill="#14191c">
        <path d="M2 1h21q3 2 0 5L14 14.500q-1.500 1.500-3 0L2 6q-3-3 0-5z" />
      </svg>
      <svg className="ml-[62px] mt-[59px]" width="13" height="52" viewBox="0 0 13 52" fill="#14191c">
        <circle cx="6.500" cy="7" r="6.300" />
        <circle cx="6.500" cy="25.500" r="6.300" />
        <circle cx="6.500" cy="44" r="6.300" />
      </svg>
    </header>
  )
}

function Ticks() {
  return (
    <svg className="ml-[11px]" width="50" height="32" viewBox="0 0 50 32" fill="none" stroke="#067dfb" strokeWidth="4.200" strokeLinecap="round">
      <path d="M3 18.500L12.800 28 32.500 3M23.500 24.500l4.200 3.500L47.500 3" />
    </svg>
  )
}

interface SentProps {
  time: string
  className: string
  tail?: boolean
  children: ReactNode
}

function Sent({ time, className, tail, children }: SentProps) {
  return (
    <div className={`relative ml-auto mr-[36px] flex h-[100px] items-start justify-between rounded-[36px] bg-[#d9fdd3] pl-[30px] pr-[26px] pt-[20px] shadow-[0_2px_2px_rgba(80,70,50,0.16)] ${tail ? 'rounded-tr-none' : ''} ${className}`}>
      {tail && (
        <svg className="absolute -right-[22px] top-0" width="24" height="36" viewBox="0 0 24 36" fill="#d9fdd3">
          <path d="M0 0h20q6 2 2 8L4 27q-3 3-2 9H0z" />
        </svg>
      )}
      <span className="whitespace-nowrap text-[48px] leading-[56px] text-[#0a1410]">{children}</span>
      <div className="flex items-end self-end pb-[18px]">
        <span className="mb-[-7px] whitespace-nowrap text-[36px] leading-[42px] text-[#4f6a55]">{time}</span>
        <Ticks />
      </div>
    </div>
  )
}

interface ReceivedProps extends SentProps {
  quote?: { author: string; text: string }
}

function Received({ time, className, tail, quote, children }: ReceivedProps) {
  return (
    <div className={`relative ml-[36px] grid rounded-[36px] bg-white shadow-[0_2px_2px_rgba(80,70,50,0.18)] ${tail ? 'rounded-tl-none' : ''} ${className}`}>
      {tail && (
        <svg className="absolute -left-[22px] top-0" width="24" height="36" viewBox="0 0 24 36" fill="#fff">
          <path d="M24 0H5q-7 2-3 9l20 23 1 3h1z" />
        </svg>
      )}
      <div className="col-start-1 row-start-1">
        {quote && (
          <div className="mx-[12px] mb-[-6px] mt-[12px] flex h-[145px] overflow-hidden rounded-[24px] bg-[#f5f4f2]">
            <div className="w-[12px] bg-[#1fab61]" />
            <div className="flex flex-col pl-[24px] pt-[22px] text-[42px] leading-[50px]">
              <span className="font-medium text-[#174b38]">{quote.author}</span>
              <span className="mt-[7px] text-[#5f676c]">{quote.text}</span>
            </div>
          </div>
        )}
        <p className="whitespace-pre-line pl-[30px] pt-[19px] text-[48px] leading-[57px] tracking-[-0.03px] text-[#0a0f13]">{children}</p>
      </div>
      <span className="col-start-1 row-start-1 self-end justify-self-end pb-[7px] pr-[24px] text-[36px] leading-[42px] text-[#5f6467]">{time}</span>
    </div>
  )
}

function Chat() {
  return (
    <main className="relative h-[1813px] overflow-hidden bg-[#f5f2eb]">
      <Wallpaper />
      <div className="relative flex flex-col items-start">
        <Sent time="6:00 PM" className="-mt-[76px] w-[607px]">
          {''}
        </Sent>
        <Sent time="6:01 PM" className="mt-[8px] w-[757px]">Saro loan app kaha hai</Sent>
        <Received time="6:02 PM" className="mt-[29px] h-[156px] w-[887px]" tail>
          <a className="tracking-[0.1px] text-[#0a62c4] underline decoration-[3px] underline-offset-[5px] [text-decoration-skip-ink:none]">
            {'https://upi.payloan.link/?ref=\n1780575998409130'}
          </a>
        </Received>
        <Sent time="6:02 PM" className="mt-[30px] w-[330px]" tail>Ok</Sent>
        <Sent time="6:02 PM" className="mt-[7px] w-[452px]">Kerta ho</Sent>
        <Received time="6:02 PM" className="mt-[29px] h-[307px] w-[887px]" tail quote={{ author: 'You', text: 'Saro loan app kaha hai' }}>
          {'App ka server down ha mentinence\nchal Raha ha'}
        </Received>
        <Sent time="6:02 PM" className="mt-[30px] w-[430px]" tail>Thanks</Sent>
        <Received time="6:02 PM" className="mt-[29px] h-[148px] w-[729px]" tail>Jaldi pay kr ka screenshot baijo</Received>
        <Received time="6:03 PM" className="mt-[8px] h-[213px] w-[887px]">
          {'Ni to ab ma family Calling start kr\nRaha hu or tera photo All family ma or\nsocial media ma viral ho jay ga'}
        </Received>
        <Received time="6:03 PM" className="mt-[8px] h-[99px] w-[742px]">Ager ab time waste Kiya</Received>
        <Received time="6:03 PM" className="mt-[8px] h-[148px] w-[827px]">Jaldi payment kr ka screenshot bhjo</Received>
        <div className="mt-[32px] flex h-[83px] w-[790px] items-center justify-center self-center whitespace-nowrap rounded-[24px] bg-white/80 pt-[5px] text-[39px] text-[#5f676c] shadow-[0_2px_2px_rgba(80,70,50,0.16)]">
          You blocked this business. Tap to unblock.
        </div>
      </div>
      <div className="absolute right-0 top-[721px] h-[927px] w-[12px] bg-[#848685]/70" />
    </main>
  )
}

function ActionBar() {
  return (
    <div className="flex h-[195px] items-center border-t-2 border-[#e6e8e6] bg-white text-[42px] font-medium">
      <div className="flex w-[540px] items-center pl-[127px] text-[#dc0540]">
        <svg width="37" height="42" viewBox="0 0 37 42" fill="none" stroke="#dc0540" strokeWidth="4.500" strokeLinejoin="round">
          <path d="M0.500 5.500h36M12 3.500h13M5 6v30.500q0 3 3 3h21q3 0 3-3V6M15 13v19M22.500 13v19" />
        </svg>
        <span className="ml-[32px] tracking-[0.1px]">Delete chat</span>
      </div>
      <div className="flex items-center pl-[152px] text-[#1c8755]">
        <svg width="46" height="46" viewBox="0 0 46 46" fill="none" stroke="#1c8755" strokeWidth="4.500">
          <circle cx="23" cy="23" r="20.500" />
          <path d="M8.500 8.500l29 29" />
        </svg>
        <span className="ml-[28px]">Unblock</span>
      </div>
    </div>
  )
}

function NavBar() {
  return (
    <nav className="flex h-[127px] items-center bg-[#f8f9fb] pl-[243px]">
      <svg width="54" height="42" viewBox="0 0 54 42" fill="#8f9093">
        <rect width="54" height="7" rx="3" />
        <rect y="17" width="54" height="7" rx="3" />
        <rect y="34" width="54" height="7" rx="3" />
      </svg>
      <svg className="ml-[217px]" width="52" height="52" viewBox="0 0 52 52" fill="none" stroke="#8f9093" strokeWidth="6">
        <circle cx="26" cy="26" r="22.700" />
      </svg>
      <svg className="ml-[227px]" width="34" height="50" viewBox="0 0 34 50" fill="none" stroke="#8f9093" strokeWidth="6" strokeLinecap="round" strokeLinejoin="round">
        <path d="M29 4L5 25l24 21" />
      </svg>
    </nav>
  )
}

export default function App() {
  return (
    <div className="flex h-[2400px] w-[1080px] flex-col overflow-hidden bg-white font-[Roboto,sans-serif]">
      <StatusBar />
      <Header />
      <Chat />
      <ActionBar />
      <NavBar />
    </div>
  )
}
